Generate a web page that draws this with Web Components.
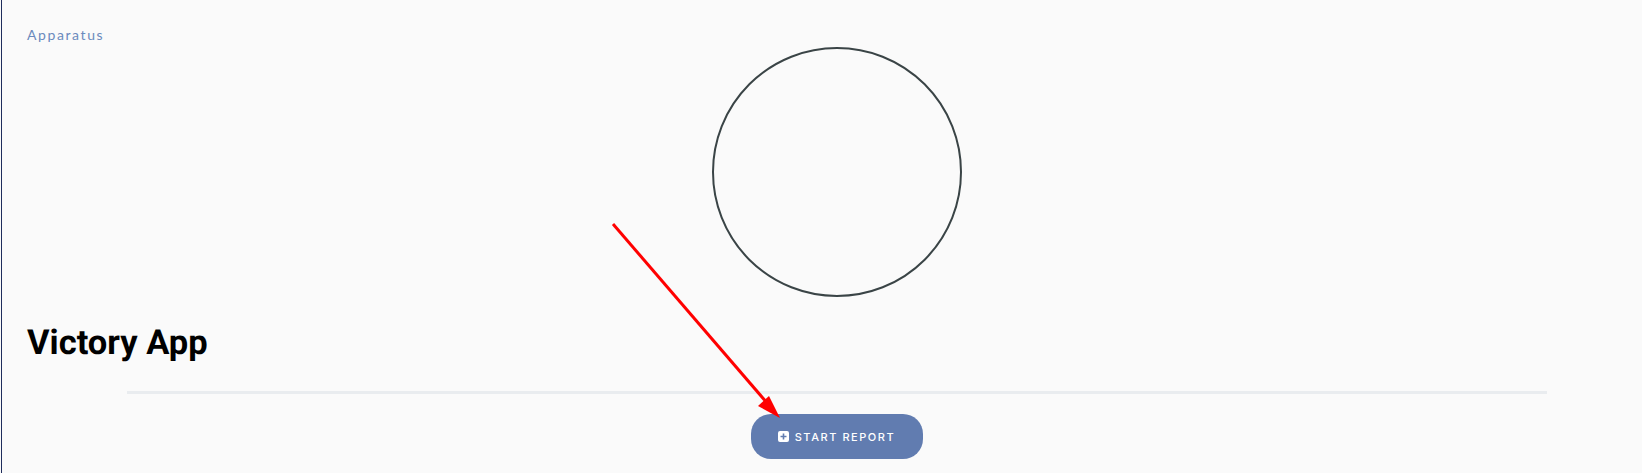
<!DOCTYPE html>
<html>
<head>
<meta charset="utf-8">
<style>
  html, body { margin: 0; height: 100%; background: #fafafa; overflow: hidden; }
</style>
</head>
<body>
<template id="report-button-tpl">
  <style>
    :host { display: inline-flex; }
    button {
      display: flex; align-items: center; justify-content: center; gap: 6px;
      width: 172px; height: 45px; padding: 0; border: 0; border-radius: 20px;
      background: #617cb0; color: #fff; cursor: pointer;
      font: 500 11px/13px "Inter", sans-serif; letter-spacing: 1.55px;
    }
    svg { width: 11px; height: 11px; flex: none; margin-left: -1px; }
    .label { padding-top: 1px; }
  </style>
  <button>
    <svg viewBox="0 0 11 11"><path fill="#fff" fill-rule="evenodd" d="M2 0h7a2 2 0 0 1 2 2v7a2 2 0 0 1-2 2H2a2 2 0 0 1-2-2V2a2 2 0 0 1 2-2zM4.7 2.5v2.2H2.5v1.6h2.2v2.2h1.6V6.3h2.2V4.7H6.3V2.5z"/></svg>
    <span class="label"><slot></slot></span>
  </button>
</template>

<template id="app-screen-tpl">
  <style>
    :host {
      display: flex; flex-direction: column; box-sizing: border-box; position: relative;
      height: 473px; margin-left: 1px; padding: 27px 0 0 26px;
      border-left: 1px solid #1f2d5c;
    }
    .crumb { margin-left: -1px; font: 400 14px/16px "Lato", sans-serif; letter-spacing: 1.6px; color: #6b8abd; }
    .hero { display: flex; justify-content: center; height: 250px; margin: 4px 0 0 -26px; padding-left: 29px; }
    .circle { box-sizing: border-box; width: 250px; height: 250px; border: 2px solid #3a4446; border-radius: 50%; }
    h1 { margin: 26px 0 0 -1px; font: 700 34.5px/40px "Roboto", sans-serif; text-rendering: geometricPrecision; color: #000; }
    hr { margin: 28px 0 0 99px; width: 1420px; height: 3px; border: 0; background: #e9ecef; }
    .actions { display: flex; justify-content: center; margin: 20px 0 0 -26px; padding-left: 30px; }
    .note { position: absolute; left: -2px; top: 0; pointer-events: none; }
  </style>
  <div class="crumb"><slot name="crumb"></slot></div>
  <div class="hero"><div class="circle"></div></div>
  <h1><slot name="title"></slot></h1>
  <hr>
  <div class="actions"><slot name="action"></slot></div>
  <svg class="note" width="1642" height="473">
    <line x1="613" y1="224" x2="768" y2="404" stroke="#f00" stroke-width="3"/>
    <polygon points="780,418 758,406 769,396" fill="#f00"/>
  </svg>
</template>

<app-screen>
  <span slot="crumb">Apparatus</span>
  <span slot="title">Victory App</span>
  <report-button slot="action">START REPORT</report-button>
</app-screen>

<script>
  class ReportButton extends HTMLElement {
    constructor() {
      super();
      this.attachShadow({ mode: 'open' });
      this.shadowRoot.appendChild(document.getElementById('report-button-tpl').content.cloneNode(true));
    }
  }

  class AppScreen extends HTMLElement {
    constructor() {
      super();
      this.attachShadow({ mode: 'open' });
      this.shadowRoot.appendChild(document.getElementById('app-screen-tpl').content.cloneNode(true));
    }
  }

  customElements.define('report-button', ReportButton);
  customElements.define('app-screen', AppScreen);
</script>
</body>
</html>
